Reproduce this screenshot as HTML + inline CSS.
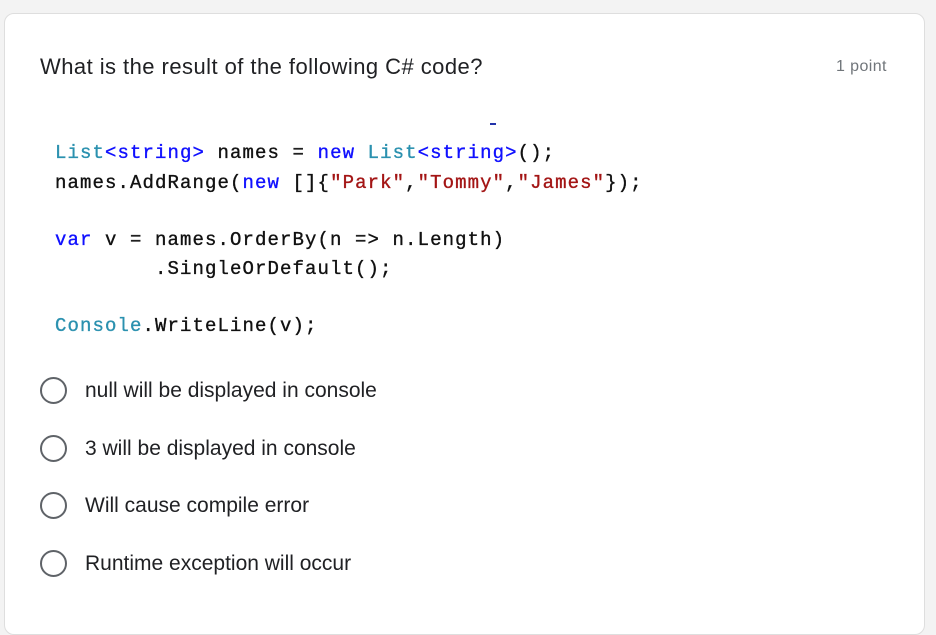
<!DOCTYPE html>
<html><head><meta charset="utf-8"><style>
html,body{margin:0;padding:0;width:936px;height:630px;background:#f3f3f3;overflow:hidden}
.card{position:absolute;left:4px;top:13px;width:919px;height:620px;background:#fff;border:1px solid #dedede;border-radius:10px}
.t{position:absolute;font-family:"Liberation Sans",sans-serif;color:#202124;white-space:nowrap}
.q{left:40px;top:54px;font-size:22px;letter-spacing:0.45px}
.pt{left:836px;top:58px;font-size:16px;color:#70757a;letter-spacing:0.4px}
.code{position:absolute;left:55px;font-family:"Liberation Mono",monospace;font-size:19px;letter-spacing:1.1px;color:#111;white-space:pre;-webkit-text-stroke:0.35px currentColor}
.c{color:#2b91af}.k{color:#1010ff}.s{color:#a31515}
.r{position:absolute;left:40px;width:23px;height:23px;border:2.5px solid #5f6368;border-radius:50%}
.o{left:85px;font-size:21px;letter-spacing:0}
</style></head><body>
<div class="card"></div>
<div class="t q">What is the result of the following C# code?</div>
<div class="t pt">1 point</div>
<div style="position:absolute;left:490px;top:123px;width:6px;height:2px;background:#2233aa"></div>
<div class="code" style="top:142px"><span class="c">List</span><span class="k">&lt;string&gt;</span> names = <span class="k">new</span> <span class="c">List</span><span class="k">&lt;string&gt;</span>();</div>
<div class="code" style="top:172px">names.AddRange(<span class="k">new</span> []{<span class="s">"Park"</span>,<span class="s">"Tommy"</span>,<span class="s">"James"</span>});</div>
<div class="code" style="top:229px"><span class="k">var</span> v = names.OrderBy(n =&gt; n.Length)</div>
<div class="code" style="top:258px">        .SingleOrDefault();</div>
<div class="code" style="top:315px"><span class="c">Console</span>.WriteLine(v);</div>
<div class="r" style="top:377px"></div><div class="t o" style="top:379px">null will be displayed in console</div>
<div class="r" style="top:435px"></div><div class="t o" style="top:437px">3 will be displayed in console</div>
<div class="r" style="top:492px"></div><div class="t o" style="top:494px">Will cause compile error</div>
<div class="r" style="top:550px"></div><div class="t o" style="top:552px">Runtime exception will occur</div>
</body></html>
